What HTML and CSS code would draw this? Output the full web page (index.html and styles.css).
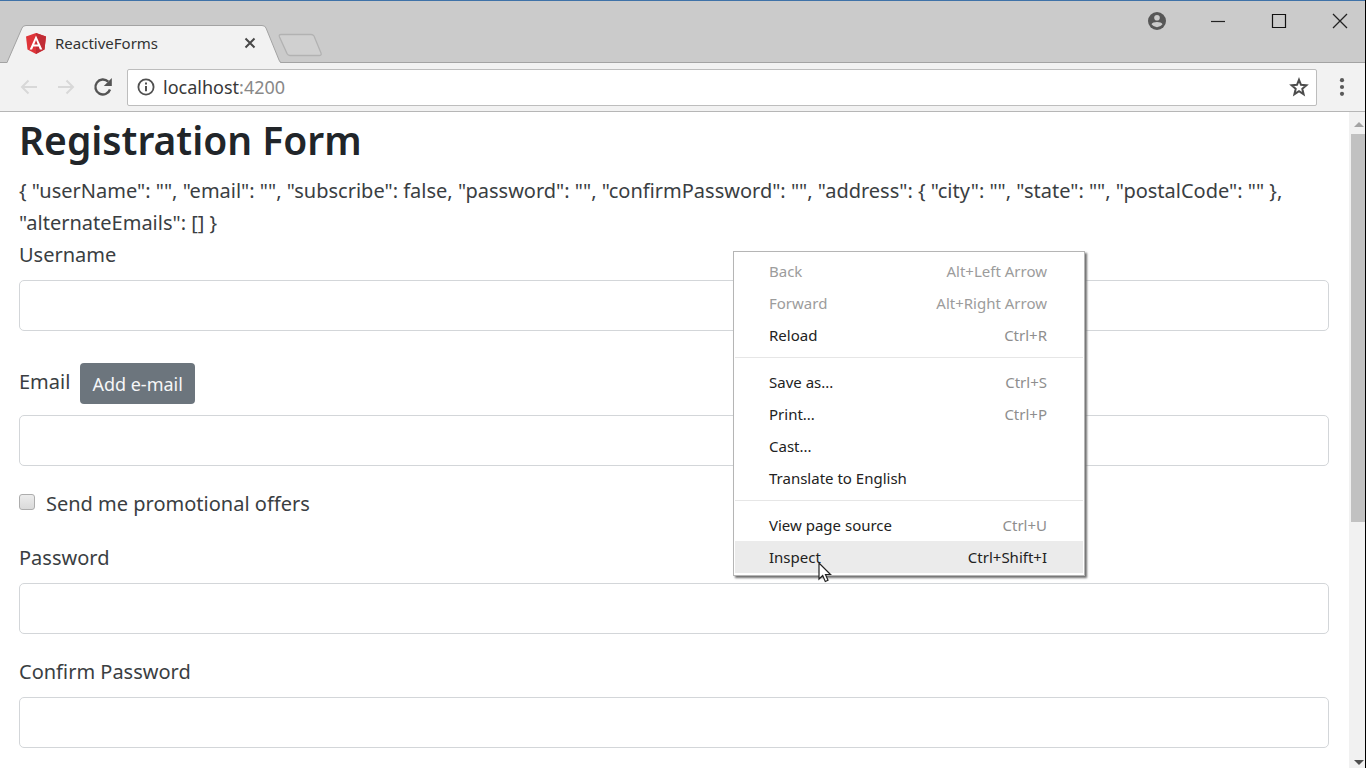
FILE: index.html
```html
<!DOCTYPE html>
<html lang="en">
<head>
<meta charset="utf-8">
<title>ReactiveForms</title>
<link rel="stylesheet" href="styles.css">
</head>
<body>
<div class="window">
  <header class="titlebar">
    <div class="tab">
      <svg class="tab-shape" viewBox="0 0 274 38" aria-hidden="true">
        <path d="M0 38 L15 3 Q16 .5 19 .5 H255 Q258 .5 259 3 L272 35 Q273 38 274 38 Z" fill="#f2f2f2"/>
        <path d="M0 37.500 L15 3 Q16 .5 19 .5 H255 Q258 .5 259 3 L272 35 Q273 37.500 274 37.500" fill="none" stroke="#a3a3a3"/>
      </svg>
      <svg class="favicon" viewBox="0 0 22 23" aria-hidden="true">
        <path d="M11 1 L21 4.500 L19.500 17.500 L11 22 L2.500 17.500 L1 4.500Z" fill="#df3439"/>
        <path d="M11 1 L21 4.500 L19.500 17.500 L11 22Z" fill="#c12c35"/>
        <path fill-rule="evenodd" d="M11 3.500 L4.700 17.500 H7.100 L8.300 14.500 H13.700 L14.900 17.500 H17.300Z M11 8 L12.800 12.500 H9.200Z" fill="#fff"/>
      </svg>
      <span class="tab-title">ReactiveForms</span>
      <button class="tab-close" aria-label="Close tab"><svg width="12" height="12" viewBox="0 0 12 12"><path d="M1.500 1.500 10.500 10.500M10.500 1.500 1.500 10.500" stroke="#484848" stroke-width="2"/></svg></button>
    </div>
    <button class="new-tab" aria-label="New tab"><svg width="46" height="24" viewBox="0 0 46 24"><path d="M4 1.500H34Q36 1.500 37 3L44 20Q45 22.500 42 22.500H13Q11 22.500 10 20.500L2.500 4Q1.500 1.500 4 1.500Z" fill="#d0d0d0" stroke="#b2b2b2" stroke-width="1.300"/></svg></button>
    <nav class="window-controls" aria-label="Window">
      <button aria-label="Profile"><svg width="18" height="18" viewBox="0 0 18 18"><circle cx="9" cy="9" r="9" fill="#575757"/><circle cx="9" cy="5.800" r="2.800" fill="#cbcbcb"/><path d="M3.500 12.300C4.500 9.300 13.500 9.300 14.500 12.300Q12.500 15.200 9 15.200T3.500 12.300Z" fill="#cbcbcb"/></svg></button>
      <button aria-label="Minimize"><svg width="16" height="16" viewBox="0 0 16 16"><path d="M1 8.500H15" stroke="#222" stroke-width="1.200"/></svg></button>
      <button aria-label="Maximize"><svg width="16" height="16" viewBox="0 0 16 16"><path d="M1.500 1.500H14.500V14.500H1.500Z" fill="none" stroke="#111" stroke-width="1.200"/></svg></button>
      <button aria-label="Close"><svg width="16" height="16" viewBox="0 0 16 16"><path d="M1 1 15 15M15 1 1 15" stroke="#222" stroke-width="1.300"/></svg></button>
    </nav>
  </header>

  <div class="toolbar">
    <button aria-label="Back"><svg width="20" height="18" viewBox="0 0 20 18"><path d="M18 9H3M9.500 2.500 3 9 9.500 15.500" fill="none" stroke="#d8d8d8" stroke-width="2"/></svg></button>
    <button aria-label="Forward"><svg width="20" height="18" viewBox="0 0 20 18"><path d="M2 9H17M10.500 2.500 17 9 10.500 15.500" fill="none" stroke="#d8d8d8" stroke-width="2"/></svg></button>
    <button aria-label="Reload"><svg width="20" height="20" viewBox="0 0 20 20"><path d="M17 12.500A7.500 7.500 0 1 1 15.200 4.700" fill="none" stroke="#545454" stroke-width="2.400"/><path d="M18.800 1V9H10.800Z" fill="#545454"/></svg></button>
    <div class="address-bar">
      <svg width="18" height="18" viewBox="0 0 18 18" aria-hidden="true"><circle cx="9" cy="9" r="7.600" fill="none" stroke="#505050" stroke-width="1.800"/><path d="M9 4.500V6.500M9 8V13.300" stroke="#505050" stroke-width="2"/></svg>
      <a class="url" href="#">localhost<span class="port">:4200</span></a>
      <button aria-label="Bookmark"><svg width="20" height="20" viewBox="0 0 20 20"><path d="M10 2.800 12 7.800 17.400 8.200 13.300 11.800 14.600 17.200 10 14.200 5.400 17.200 6.700 11.800 2.600 8.200 8 7.800Z" fill="none" stroke="#4c4c4c" stroke-width="2"/></svg></button>
    </div>
    <button class="menu-button" aria-label="Menu"><svg width="6" height="18" viewBox="0 0 6 18"><g fill="#5a5a5a"><circle cx="3" cy="2.200" r="2.100"/><circle cx="3" cy="9" r="2.100"/><circle cx="3" cy="15.800" r="2.100"/></g></svg></button>
  </div>

  <div class="viewport">
    <main class="page">
      <h1>Registration Form</h1>
      <div class="form-value">{ "userName": "", "email": "", "subscribe": false, "password": "", "confirmPassword": "", "address": { "city": "", "state": "", "postalCode": "" }, "alternateEmails": [] }</div>
      <form>
        <div class="group">
          <label for="username">Username</label>
          <input class="control" id="username" type="text">
        </div>
        <div class="group group-email">
          <div class="label-row">
            <label for="email">Email</label>
            <button class="add-email" type="button">Add e-mail</button>
          </div>
          <input class="control" id="email" type="text">
        </div>
        <div class="check">
          <input id="subscribe" type="checkbox">
          <label for="subscribe">Send me promotional offers</label>
        </div>
        <div class="group">
          <label for="password">Password</label>
          <input class="control" id="password" type="password">
        </div>
        <div class="group">
          <label for="confirm">Confirm Password</label>
          <input class="control" id="confirm" type="password">
        </div>
      </form>
    </main>
    <div class="scrollbar" aria-hidden="true">
      <svg width="12" height="6" viewBox="0 0 12 6"><path d="M1 6 6 1 11 6Z" fill="#a3a3a3"/></svg>
      <div class="track"><div class="thumb"></div></div>
      <svg width="12" height="6" viewBox="0 0 12 6"><path d="M1 0H11L6 5Z" fill="#505050"/></svg>
    </div>
  </div>

  <div class="context-menu" role="menu">
    <button role="menuitem" disabled><span>Back</span><kbd>Alt+Left Arrow</kbd></button>
    <button role="menuitem" disabled><span>Forward</span><kbd>Alt+Right Arrow</kbd></button>
    <button role="menuitem"><span>Reload</span><kbd>Ctrl+R</kbd></button>
    <hr>
    <button role="menuitem"><span>Save as...</span><kbd>Ctrl+S</kbd></button>
    <button role="menuitem"><span>Print...</span><kbd>Ctrl+P</kbd></button>
    <button role="menuitem"><span>Cast...</span></button>
    <button role="menuitem"><span>Translate to English</span></button>
    <hr>
    <button role="menuitem"><span>View page source</span><kbd>Ctrl+U</kbd></button>
    <button role="menuitem" class="active"><span>Inspect</span><kbd>Ctrl+Shift+I</kbd></button>
  </div>
  <svg class="cursor" viewBox="0 0 14 21" aria-hidden="true"><path d="M1 1V17L4.700 13.500 7.300 19.500 10 18.300 7.500 12.500H12.500Z" fill="#fff" stroke="#222" stroke-width="1.200"/></svg>
</div>
</body>
</html>
```
FILE: styles.css
```css
* {
  box-sizing: border-box;
}

body {
  margin: 0;
  font-family: "Noto Sans", "Open Sans", sans-serif;
  font-size: 20px;
  line-height: 32px;
  color: #3a3e42;
}

button {
  display: flex;
  align-items: center;
  justify-content: center;
  padding: 0;
  border: 0;
  background: none;
  font: inherit;
  color: inherit;
}

.window {
  position: relative;
  display: flex;
  flex-direction: column;
  height: 100vh;
  overflow: hidden;
  border-right: 1px solid #000;
  background: #fff;
}

.titlebar {
  display: flex;
  align-items: flex-end;
  flex: none;
  height: 63px;
  padding-left: 7px;
  border-top: 1px solid #3f72a8;
  border-bottom: 1px solid #a3a3a3;
  background: #cbcbcb;
}

.tab {
  position: relative;
  display: flex;
  align-items: center;
  width: 274px;
  height: 38px;
  margin-bottom: -1px;
  padding: 0 17px 2px 18px;
  font-size: 15px;
  color: #333;
}

.tab-shape {
  position: absolute;
  inset: 0;
}

.favicon {
  position: relative;
  width: 22px;
  height: 23px;
  margin-right: 8px;
}

.tab-title {
  position: relative;
  flex: 1;
}

.tab-close {
  position: relative;
  width: 28px;
  height: 28px;
}

.new-tab {
  margin: 0 auto 5px -4px;
}

.window-controls {
  display: flex;
  align-self: flex-start;
  padding-top: 5px;
}

.window-controls button {
  width: 61px;
  height: 30px;
}

.window-controls button:last-child {
  width: 50px;
  margin-left: 6px;
}

.toolbar {
  display: flex;
  align-items: center;
  flex: none;
  height: 49px;
  padding: 0 20px 0 19px;
  gap: 17px;
  border-bottom: 1px solid #b6b6b6;
  background: #f2f2f2;
}

.address-bar {
  display: flex;
  align-items: center;
  flex: 1;
  gap: 8px;
  height: 37px;
  margin-left: -3px;
  padding: 0 7px 0 9px;
  border: 1px solid #bdbdbd;
  border-radius: 2px;
  background: #fff;
}

.url {
  flex: 1;
  font-size: 18px;
  color: #383838;
  text-decoration: none;
}

.port {
  color: #888;
}

.menu-button {
  margin-left: 5px;
}

.viewport {
  display: flex;
  flex: 1;
  min-height: 0;
}

.page {
  flex: 1;
  padding: 0 20px 0 19px;
  overflow: hidden;
}

h1 {
  margin: 0 0 7px;
  font-size: 39px;
  font-weight: 600;
  line-height: 56px;
  color: #212529;
}

.group {
  display: flex;
  flex-direction: column;
  gap: 9px;
  margin-bottom: 22px;
}

.group-email {
  gap: 11px;
  padding-top: 10px;
}

.label-row {
  display: flex;
  gap: 10px;
}

.label-row label {
  padding-top: 3px;
}

.add-email {
  height: 41px;
  padding: 0 12px;
  border-radius: 4px;
  background: #6c757d;
  font-size: 18px;
  color: #f6f7f8;
}

.control {
  width: 100%;
  height: 51px;
  padding: 8px 16px;
  border: 1px solid #d3d6d9;
  border-radius: 5px;
  background: #fff;
  font: inherit;
}

.check {
  display: flex;
  gap: 11px;
  margin-bottom: 22px;
}

.check input {
  width: 16px;
  height: 16px;
  margin: 6px 0 0;
  appearance: none;
  border: 1px solid #adadad;
  border-radius: 3px;
  background: linear-gradient(#ececec, #dadada);
}

.scrollbar {
  display: flex;
  flex-direction: column;
  align-items: flex-end;
  width: 16px;
  padding: 9px 0 2px;
  background: #f1f1f1;
}

.track {
  flex: 1;
  width: 14px;
  padding-top: 7px;
}

.thumb {
  height: 62%;
  background: #c1c1c1;
}

.context-menu {
  position: absolute;
  top: 251px;
  left: 733px;
  width: 352px;
  padding: 3px 1px 2px;
  border: 1px solid #b5b5b5;
  background: #fff;
  box-shadow: 2px 2px 2px #707070;
  font-size: 15px;
  color: #222;
}

.context-menu button {
  justify-content: space-between;
  width: 100%;
  height: 32px;
  padding: 0 36px 0 34px;
}

.context-menu hr {
  height: 1px;
  margin: 6px 0 8px;
  border: 0;
  background: #e6e6e6;
}

.context-menu kbd {
  font: inherit;
  color: #8e8e8e;
}

.context-menu button:disabled,
.context-menu button:disabled kbd {
  color: #9c9c9c;
}

.context-menu .active {
  background: #ebebeb;
}

.context-menu .active kbd {
  color: #222;
}

.cursor {
  position: absolute;
  top: 562px;
  left: 818px;
  width: 14px;
  height: 21px;
}
```
